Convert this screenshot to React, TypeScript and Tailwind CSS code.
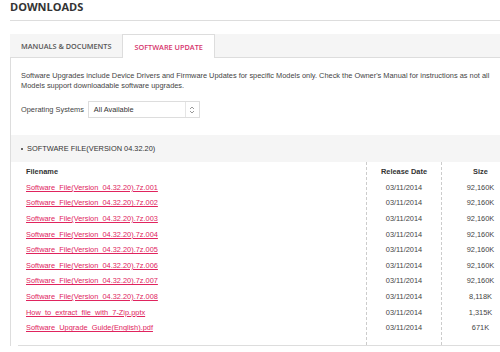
import React from "react";

const files = [
  { name: "Software_File(Version_04.32.20).7z.001", date: "03/11/2014", size: "92,160K" },
  { name: "Software_File(Version_04.32.20).7z.002", date: "03/11/2014", size: "92,160K" },
  { name: "Software_File(Version_04.32.20).7z.003", date: "03/11/2014", size: "92,160K" },
  { name: "Software_File(Version_04.32.20).7z.004", date: "03/11/2014", size: "92,160K" },
  { name: "Software_File(Version_04.32.20).7z.005", date: "03/11/2014", size: "92,160K" },
  { name: "Software_File(Version_04.32.20).7z.006", date: "03/11/2014", size: "92,160K" },
  { name: "Software_File(Version_04.32.20).7z.007", date: "03/11/2014", size: "92,160K" },
  { name: "Software_File(Version_04.32.20).7z.008", date: "03/11/2014", size: "8,118K" },
  { name: "How_to_extract_file_with_7-Zip.pptx", date: "03/11/2014", size: "1,315K" },
  { name: "Software_Upgrade_Guide(English).pdf", date: "03/11/2014", size: "671K" },
];

function UpDown() {
  return (
    <svg width="6" height="8" viewBox="0 0 6 8" fill="none" stroke="#999" strokeWidth="1">
      <path d="M1 3 L3 1 L5 3" />
      <path d="M1 5 L3 7 L5 5" />
    </svg>
  );
}

export default function App() {
  return (
    <div className="w-[500px] h-[352px] overflow-hidden bg-white font-['Liberation_Sans',Arial,sans-serif] text-[#444]">
      <div className="w-[520px] pl-[10px]">
        {/* title */}
        <div className="h-[21px] border-b border-[#ddd]">
          <h1 className="pt-[1px] font-['Open_Sans',sans-serif] text-[11px] leading-[12px] font-bold text-[#333]">
            DOWNLOADS
          </h1>
        </div>

        {/* tabs */}
        <div className="mt-[13px] flex h-[24px] border-b border-[#ddd] bg-[#f5f5f5] font-['Open_Sans',sans-serif] text-[7.3px] font-semibold">
          <div className="flex items-center px-[11px] pt-[1px] text-[#555]">MANUALS &amp; DOCUMENTS</div>
          <div className="-mb-px flex items-center border-x border-t border-[#ddd] bg-white px-[11px] pt-[1px] text-[#d6336c]">
            SOFTWARE UPDATE
          </div>
        </div>

        {/* panel */}
        <div className="border-l border-[#ddd]">
          <p className="px-[10px] pt-[13px] text-[7.4px] leading-[10px] text-[#444]">
            Software Upgrades include Device Drivers and Firmware Updates for specific Models only. Check the Owner's Manual for instructions as not all Models support downloadable software upgrades.
          </p>

          <div className="mt-[10px] flex items-center gap-[4px] px-[10px] text-[7.4px]">
            <span className="text-[#444]">Operating Systems</span>
            <div className="flex h-[17px] w-[112px] items-center border border-[#ddd] bg-white">
              <span className="flex-1 pl-[5px] text-[#333]">All Available</span>
              <div className="flex h-full w-[14px] items-center justify-center border-l border-[#e5e5e5]">
                <UpDown />
              </div>
            </div>
          </div>

          <div className="mt-[17px] flex h-[27px] items-center gap-[4px] bg-[#f5f5f5] pt-[1px] pl-[10px] text-[7.4px] text-[#333]">
            <span className="h-[2px] w-[2px] bg-[#666]" />
            <span>SOFTWARE FILE(VERSION 04.32.20)</span>
          </div>

          {/* table */}
          <div className="ml-[7px] flex border-b border-[#ddd] text-[7.4px]">
            <div className="w-[348px] pt-[2px] pb-[9px]">
              <div className="flex h-[15.6px] items-center pl-[8px] font-bold text-[#333]">Filename</div>
              {files.map((f) => (
                <div key={f.name} className="flex h-[15.6px] items-center pl-[8px]">
                  <a href="#" className="text-[#e0245e] underline">
                    {f.name}
                  </a>
                </div>
              ))}
            </div>
            <div className="w-[75px] border-l border-dashed border-[#ccc] pt-[2px] pb-[9px]">
              <div className="flex h-[15.6px] items-center justify-center font-bold text-[#333]">Release Date</div>
              {files.map((f) => (
                <div key={f.name} className="flex h-[15.6px] items-center justify-center text-[#444]">
                  {f.date}
                </div>
              ))}
            </div>
            <div className="w-[78px] border-l border-dashed border-[#ccc] pt-[2px] pb-[9px]">
              <div className="flex h-[15.6px] items-center justify-center font-bold text-[#333]">Size</div>
              {files.map((f) => (
                <div key={f.name} className="flex h-[15.6px] items-center justify-center text-[#444]">
                  {f.size}
                </div>
              ))}
            </div>
          </div>
        </div>
      </div>
    </div>
  );
}
